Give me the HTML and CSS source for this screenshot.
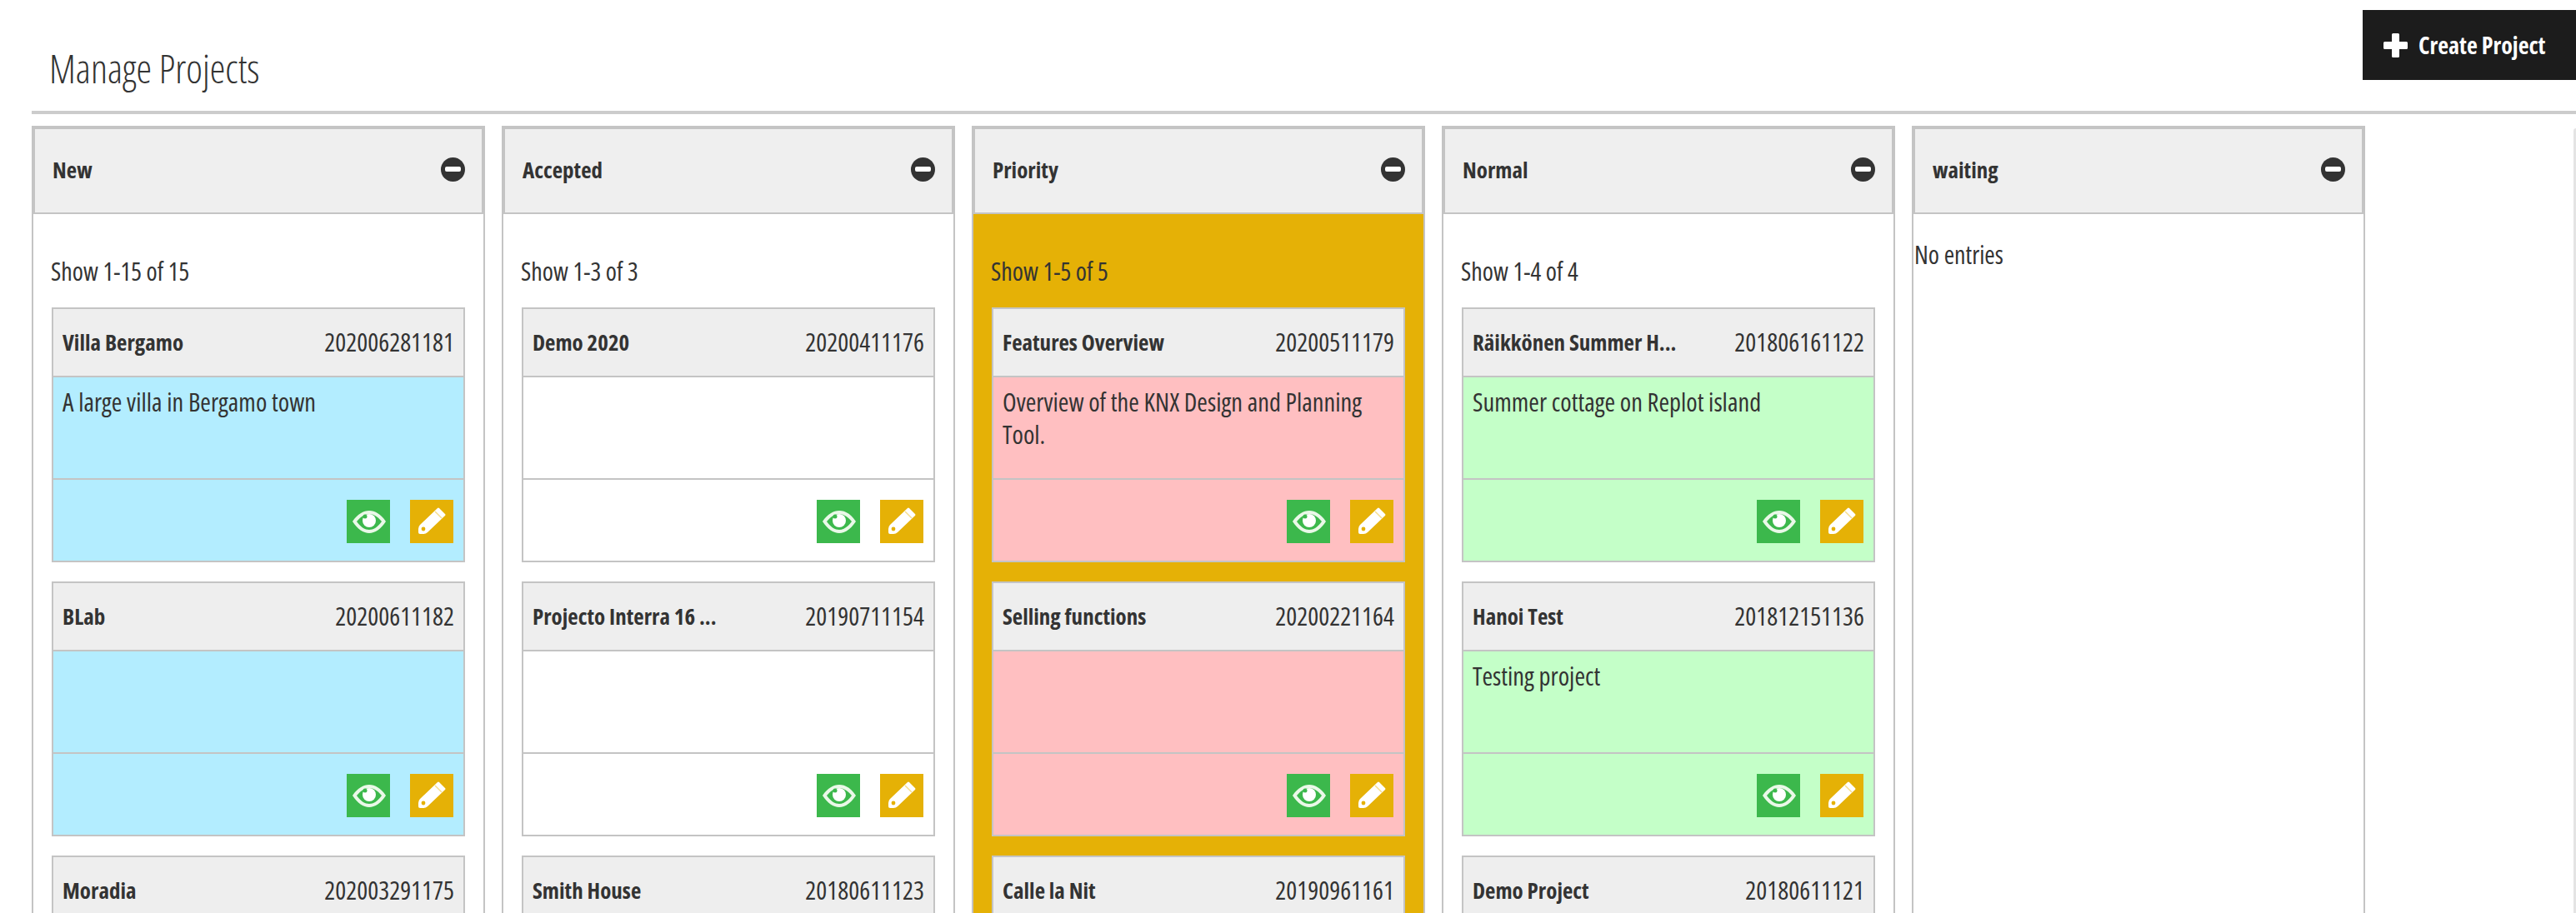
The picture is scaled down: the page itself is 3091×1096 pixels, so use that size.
FILE: index.html
```html
<!DOCTYPE html>
<html>
<head>
    <title>Manage Projects</title>
    <link rel="stylesheet" href="styles.css">
</head>
<body>
    <svg class="icon-defs" width="0" height="0">
        <symbol id="i-eye" viewBox="0 0 52 52">
            <path d="M7 26 C13 17 20 13 27 13 C34 13 41 17 47 26 C41 35 34 40 27 40 C20 40 13 35 7 26 Z M12 26 C17 33 22 36 27 36 C32 36 37 33 42 26 C37 20 32 17 27 17 C22 17 17 20 12 26 Z" fill="#eaf8e8" fill-rule="evenodd"/>
            <circle cx="27" cy="25" r="8" fill="#fff"/>
            <circle cx="22" cy="20" r="2.5" fill="#3cb84c"/>
        </symbol>
        <symbol id="i-pencil" viewBox="0 0 52 52">
            <path d="M35 10 L42 17 Q43 18 42 19 L21 39 Q19 41 16 41 L12 41 Q10 41 10 39 L10 35 Q10 32 12 30 L33 10 Q34 9 35 10 Z" fill="#fff"/>
            <circle cx="16" cy="35" r="2.4" fill="#e5b106"/>
            <path d="M30 14 L38 22" stroke="#f6dd8a" stroke-width="1.5"/>
        </symbol>
    </svg>

    <div class="page-head">
        <h1>Manage Projects</h1>
        <button class="create-btn">
            <svg class="plus" viewBox="0 0 29 29"><path d="M10 1.5 Q10 0 11.500 0 L17.500 0 Q19 0 19 1.500 L19 10 L27.500 10 Q29 10 29 11.500 L29 17.500 Q29 19 27.500 19 L19 19 L19 27.500 Q19 29 17.500 29 L11.500 29 Q10 29 10 27.500 L10 19 L1.500 19 Q0 19 0 17.500 L0 11.500 Q0 10 1.500 10 L10 10 Z" fill="#fff"/></svg>
            Create Project
        </button>
    </div>

    <div class="board">
        <div class="column">
            <div class="column-head"><span>New</span><i class="collapse"></i></div>
            <div class="column-body">
                <p class="count">Show 1-15 of 15</p>
                <div class="card blue">
                    <div class="card-head"><b>Villa Bergamo</b><span>202006281181</span></div>
                    <div class="card-text">A large villa in Bergamo town</div>
                    <div class="card-foot">
                        <a class="act view"><svg><use href="#i-eye"/></svg></a>
                        <a class="act edit"><svg><use href="#i-pencil"/></svg></a>
                    </div>
                </div>
                <div class="card blue">
                    <div class="card-head"><b>BLab</b><span>20200611182</span></div>
                    <div class="card-text"></div>
                    <div class="card-foot">
                        <a class="act view"><svg><use href="#i-eye"/></svg></a>
                        <a class="act edit"><svg><use href="#i-pencil"/></svg></a>
                    </div>
                </div>
                <div class="card blue">
                    <div class="card-head"><b>Moradia</b><span>202003291175</span></div>
                </div>
            </div>
        </div>

        <div class="column">
            <div class="column-head"><span>Accepted</span><i class="collapse"></i></div>
            <div class="column-body">
                <p class="count">Show 1-3 of 3</p>
                <div class="card">
                    <div class="card-head"><b>Demo 2020</b><span>20200411176</span></div>
                    <div class="card-text"></div>
                    <div class="card-foot">
                        <a class="act view"><svg><use href="#i-eye"/></svg></a>
                        <a class="act edit"><svg><use href="#i-pencil"/></svg></a>
                    </div>
                </div>
                <div class="card">
                    <div class="card-head"><b>Projecto Interra 16 ...</b><span>20190711154</span></div>
                    <div class="card-text"></div>
                    <div class="card-foot">
                        <a class="act view"><svg><use href="#i-eye"/></svg></a>
                        <a class="act edit"><svg><use href="#i-pencil"/></svg></a>
                    </div>
                </div>
                <div class="card">
                    <div class="card-head"><b>Smith House</b><span>20180611123</span></div>
                </div>
            </div>
        </div>

        <div class="column priority">
            <div class="column-head"><span>Priority</span><i class="collapse"></i></div>
            <div class="column-body">
                <p class="count">Show 1-5 of 5</p>
                <div class="card pink">
                    <div class="card-head"><b>Features Overview</b><span>20200511179</span></div>
                    <div class="card-text">Overview of the KNX Design and Planning Tool.</div>
                    <div class="card-foot">
                        <a class="act view"><svg><use href="#i-eye"/></svg></a>
                        <a class="act edit"><svg><use href="#i-pencil"/></svg></a>
                    </div>
                </div>
                <div class="card pink">
                    <div class="card-head"><b>Selling functions</b><span>20200221164</span></div>
                    <div class="card-text"></div>
                    <div class="card-foot">
                        <a class="act view"><svg><use href="#i-eye"/></svg></a>
                        <a class="act edit"><svg><use href="#i-pencil"/></svg></a>
                    </div>
                </div>
                <div class="card pink">
                    <div class="card-head"><b>Calle la Nit</b><span>20190961161</span></div>
                </div>
            </div>
        </div>

        <div class="column">
            <div class="column-head"><span>Normal</span><i class="collapse"></i></div>
            <div class="column-body">
                <p class="count">Show 1-4 of 4</p>
                <div class="card green">
                    <div class="card-head"><b>Räikkönen Summer H...</b><span>201806161122</span></div>
                    <div class="card-text">Summer cottage on Replot island</div>
                    <div class="card-foot">
                        <a class="act view"><svg><use href="#i-eye"/></svg></a>
                        <a class="act edit"><svg><use href="#i-pencil"/></svg></a>
                    </div>
                </div>
                <div class="card green">
                    <div class="card-head"><b>Hanoi Test</b><span>201812151136</span></div>
                    <div class="card-text">Testing project</div>
                    <div class="card-foot">
                        <a class="act view"><svg><use href="#i-eye"/></svg></a>
                        <a class="act edit"><svg><use href="#i-pencil"/></svg></a>
                    </div>
                </div>
                <div class="card green">
                    <div class="card-head"><b>Demo Project</b><span>20180611121</span></div>
                </div>
            </div>
        </div>

        <div class="column">
            <div class="column-head"><span>waiting</span><i class="collapse"></i></div>
            <div class="column-body empty">
                <p class="no-entries">No entries</p>
            </div>
        </div>
    </div>

    <div class="scroll-edge"></div>
</body>
</html>
```

FILE: styles.css
```css
html, body {
    height: 100%;
    overflow: hidden;
}
body {
    margin: 0;
    background: #fff;
    color: #333;
    font-family: "Open Sans", "Liberation Sans", sans-serif;
    font-stretch: 75%;
    font-size: 30px;
}
.icon-defs {
    display: block;
    height: 0;
}
.scroll-edge {
    position: fixed;
    top: 154px;
    right: 0;
    bottom: 0;
    width: 3px;
    border-top-left-radius: 3px;
    background: #e4e4e4;
}

/* top bar */
.page-head {
    display: flex;
    justify-content: space-between;
    align-items: flex-start;
    height: 133px;
    margin-left: 38px;
    border-bottom: 4px solid #ccc;
}
h1 {
    margin: 55px 0 0 21px;
    font-size: 47px;
    font-weight: 300;
    line-height: 54px;
}
.create-btn {
    display: flex;
    align-items: center;
    gap: 13px;
    width: 256px;
    height: 84px;
    margin-top: 12px;
    padding: 0 0 0 25px;
    border: none;
    background: #1c1c1c;
    color: #fff;
    font-family: inherit;
    font-stretch: 75%;
    font-size: 28px;
    font-weight: bold;
    white-space: nowrap;
}
.plus {
    width: 29px;
    height: 29px;
}

/* columns */
.board {
    display: flex;
    gap: 20px;
    margin: 14px 0 0 38px;
}
.column {
    width: 544px;
    flex: none;
}
.column-head {
    display: flex;
    justify-content: space-between;
    align-items: center;
    box-sizing: border-box;
    height: 106px;
    padding: 0 20px 4px 21px;
    border: 4px solid #c4c4c4;
    border-bottom-width: 2px;
    background: #efefef;
    font-size: 27px;
    font-weight: bold;
}
.collapse {
    position: relative;
    width: 29px;
    height: 29px;
    border-radius: 50%;
    background: #333;
}
.collapse::after {
    content: "";
    position: absolute;
    left: 5px;
    top: 11px;
    width: 19px;
    height: 6px;
    border-radius: 2px;
    background: #fff;
}
.column-body {
    box-sizing: border-box;
    height: 900px;
    padding: 0 22px;
    border: solid #c4c4c4;
    border-width: 0 2px;
}
.priority .column-body {
    background: #e5b106;
}
.count {
    margin: 0;
    padding: 51px 0 0;
    height: 112px;
    box-sizing: border-box;
    line-height: 36px;
    margin-left: -1px;
}
.column-body.empty {
    padding: 0;
}
.no-entries {
    margin: 0;
    padding: 31px 0 0 1px;
    line-height: 36px;
}

/* project cards */
.card {
    box-sizing: border-box;
    height: 306px;
    margin-bottom: 23px;
    border: 2px solid #c4c4c4;
    background: #fff;
}
.card.blue { background: #b3edff; }
.card.pink { background: #ffbfc1; }
.card.green { background: #c4ffc8; }
.card-head {
    display: flex;
    justify-content: space-between;
    align-items: center;
    box-sizing: border-box;
    height: 82px;
    padding: 0 11px 2px;
    border-bottom: 2px solid #c4c4c4;
    background: #eee;
    font-size: 30.500px;
}
.card-head b {
    font-size: 27px;
    white-space: nowrap;
}
.card-text {
    box-sizing: border-box;
    height: 123px;
    padding: 10px 11px 0;
    border-bottom: 2px solid #c4c4c4;
    font-size: 30.500px;
    line-height: 39px;
}
.card-foot {
    display: flex;
    justify-content: flex-end;
    gap: 24px;
    padding: 24px 12px 0 0;
}
.act {
    display: block;
    width: 52px;
    height: 52px;
}
.act svg {
    display: block;
    width: 52px;
    height: 52px;
}
.act.view { background: #3cb84c; }
.act.edit { background: #e5b106; }
```
